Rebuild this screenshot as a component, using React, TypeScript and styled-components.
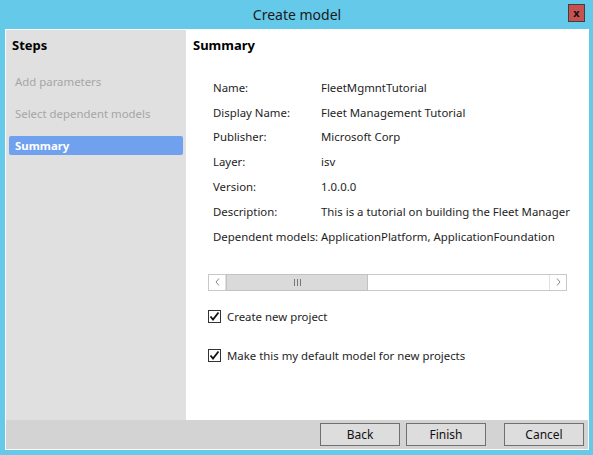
import React from "react";
import styled, { createGlobalStyle } from "styled-components";

const Global = createGlobalStyle`
  html, body { margin: 0; padding: 0; }
  body {
    background: #65c9ea;
    font-family: "Noto Sans", "Open Sans", sans-serif;
    font-size: 11.4px;
    color: #1e1e1e;
  }
`;

const Window = styled.div`
  width: 593px;
  height: 455px;
  background: #65c9ea;
  display: flex;
  flex-direction: column;
  padding: 0 4px 5px 5px;
  box-sizing: border-box;
`;

const TitleBar = styled.div`
  height: 29px;
  position: relative;
  display: flex;
  align-items: center;
  justify-content: center;
  font-size: 14px;
  color: #1a1a1a;
`;

const CloseButton = styled.div`
  position: absolute;
  right: 4px;
  top: 4px;
  width: 17px;
  height: 18px;
  background: #c75050;
  border: 1px solid #3f3f3f;
  display: flex;
  align-items: center;
  justify-content: center;
  font-size: 11px;
  font-weight: 700;
  color: #111;
  line-height: 1;
  padding-bottom: 2px;
  box-sizing: border-box;
`;

const Frame = styled.div`
  flex: 1;
  border: 1px solid #ffffff;
  display: flex;
  flex-direction: column;
  min-height: 0;
`;

const Main = styled.div`
  flex: 1;
  display: flex;
  min-height: 0;
`;

const Sidebar = styled.div`
  width: 180px;
  background: #e0e0e0;
  display: flex;
  flex-direction: column;
  padding: 6px 3px 0 3px;
  box-sizing: border-box;
`;

const Heading = styled.div`
  font-weight: 700;
  font-size: 13px;
  color: #000;
  height: 18px;
  line-height: 18px;
`;

const SideHeading = styled(Heading)`
  padding-left: 3px;
  margin-bottom: 18px;
`;

const Step = styled.div<{ $active?: boolean }>`
  height: 19px;
  line-height: 19px;
  padding-left: 6px;
  margin-bottom: 13px;
  border-radius: 2px;
  color: ${(p) => (p.$active ? "#ffffff" : "#a6a6a6")};
  background: ${(p) => (p.$active ? "#6fa1ee" : "transparent")};
  font-weight: ${(p) => (p.$active ? 700 : 400)};
`;

const Content = styled.div`
  flex: 1;
  background: #ffffff;
  padding: 6px 0 0 7px;
  display: flex;
  flex-direction: column;
`;

const Table = styled.div`
  display: grid;
  grid-template-columns: 108px 1fr;
  grid-auto-rows: 24.8px;
  align-items: center;
  margin: 21px 0 0 20px;
  white-space: nowrap;
  width: 370px;
`;

const Label = styled.div`
  color: #1e1e1e;
`;

const Value = styled.div`
  color: #1e1e1e;
`;

const ScrollBar = styled.div`
  margin: 25px 0 0 15px;
  width: 359px;
  height: 17px;
  border: 1px solid #c8c8c8;
  box-sizing: border-box;
  display: flex;
  background: #fff;
`;

const Arrow = styled.div<{ $right?: boolean }>`
  width: 16px;
  display: flex;
  align-items: center;
  justify-content: center;
  border-right: ${(p) => (p.$right ? "none" : "1px solid #e0e0e0")};
  border-left: ${(p) => (p.$right ? "1px solid #e0e0e0" : "none")};
`;

const Track = styled.div`
  flex: 1;
  display: flex;
`;

const Thumb = styled.div`
  width: 142px;
  background: #dadada;
  border: 1px solid #c2c2c2;
  box-sizing: border-box;
  margin: -1px 0;
  display: flex;
  align-items: center;
  justify-content: center;
`;

const CheckRow = styled.label<{ $gap: number }>`
  display: flex;
  align-items: center;
  gap: 6px;
  margin: ${(p) => p.$gap}px 0 0 15px;
  height: 16px;
`;

const Box = styled.span`
  width: 13px;
  height: 13px;
  border: 1px solid #333;
  box-sizing: border-box;
  background: #fff;
  display: flex;
  align-items: center;
  justify-content: center;
`;

const Footer = styled.div`
  height: 29px;
  background: #d3d3d3;
  display: flex;
  align-items: center;
  justify-content: flex-end;
  padding-right: 4px;
`;

const Button = styled.div<{ $gap: number }>`
  width: 80px;
  height: 23px;
  box-sizing: border-box;
  border: 1px solid #707070;
  background: #dddddd;
  display: flex;
  align-items: center;
  justify-content: center;
  margin-left: ${(p) => p.$gap}px;
  color: #111;
  font-size: 12px;
`;

const Check = () => (
  <svg width="11" height="11" viewBox="0 0 11 11">
    <path d="M1.5 5.5 L4 8.5 L9.5 1.5" stroke="#111" strokeWidth="1.8" fill="none" />
  </svg>
);

const rows: [string, string][] = [
  ["Name:", "FleetMgmntTutorial"],
  ["Display Name:", "Fleet Management Tutorial"],
  ["Publisher:", "Microsoft Corp"],
  ["Layer:", "isv"],
  ["Version:", "1.0.0.0"],
  ["Description:", "This is a tutorial on building the Fleet Manager"],
  ["Dependent models:", "ApplicationPlatform, ApplicationFoundation"],
];

export default function App() {
  return (
    <>
      <Global />
      <Window>
        <TitleBar>
          Create model
          <CloseButton>x</CloseButton>
        </TitleBar>
        <Frame>
          <Main>
            <Sidebar>
              <SideHeading>Steps</SideHeading>
              <Step>Add parameters</Step>
              <Step>Select dependent models</Step>
              <Step $active>Summary</Step>
            </Sidebar>
            <Content>
              <Heading>Summary</Heading>
              <Table>
                {rows.map(([l, v]) => (
                  <React.Fragment key={l}>
                    <Label>{l}</Label>
                    <Value>{v}</Value>
                  </React.Fragment>
                ))}
              </Table>
              <ScrollBar>
                <Arrow>
                  <svg width="5" height="8" viewBox="0 0 5 8">
                    <path d="M4 0.5 L1 4 L4 7.5" stroke="#888" fill="none" />
                  </svg>
                </Arrow>
                <Track>
                  <Thumb>
                    <svg width="7" height="7" viewBox="0 0 7 7">
                      <path d="M0.5 0 V7 M3.5 0 V7 M6.5 0 V7" stroke="#777" />
                    </svg>
                  </Thumb>
                </Track>
                <Arrow $right>
                  <svg width="5" height="8" viewBox="0 0 5 8">
                    <path d="M1 0.5 L4 4 L1 7.5" stroke="#888" fill="none" />
                  </svg>
                </Arrow>
              </ScrollBar>
              <CheckRow $gap={18}>
                <Box>
                  <Check />
                </Box>
                Create new project
              </CheckRow>
              <CheckRow $gap={23}>
                <Box>
                  <Check />
                </Box>
                Make this my default model for new projects
              </CheckRow>
            </Content>
          </Main>
          <Footer>
            <Button $gap={0}>Back</Button>
            <Button $gap={6}>Finish</Button>
            <Button $gap={18}>Cancel</Button>
          </Footer>
        </Frame>
      </Window>
    </>
  );
}
